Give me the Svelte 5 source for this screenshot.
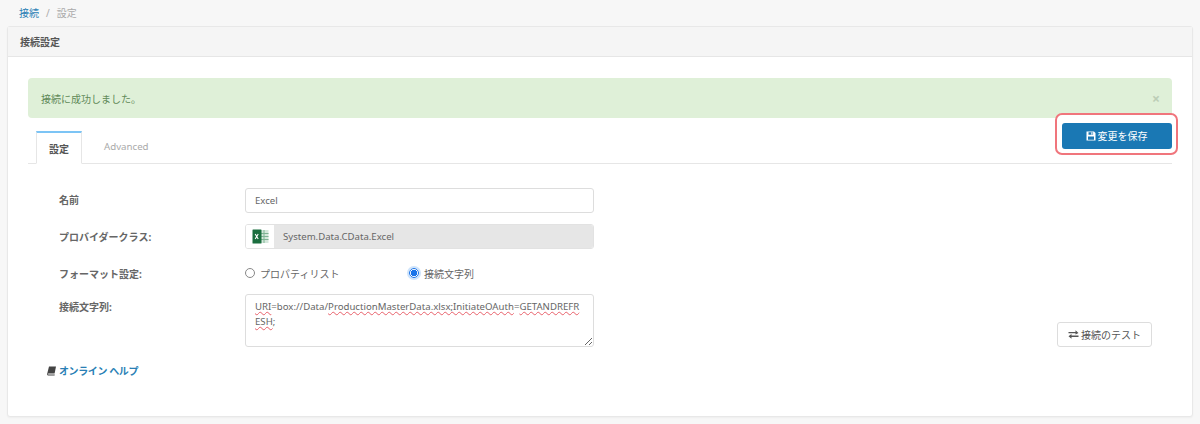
<script lang="ts">
  let format = $state('string');
</script>

<div class="page">
  <nav class="breadcrumb">
    <a href="#top">接続</a>
    <span class="sep">/</span>
    <span class="current">設定</span>
  </nav>

  <section class="card">
    <header class="card-header">接続設定</header>

    <div class="card-body">
      <div class="alert">
        <span>接続に成功しました。</span>
        <span class="close">×</span>
      </div>

      <div class="tabs">
        <div class="tab active">設定</div>
        <div class="tab">Advanced</div>
        <div class="save-highlight">
          <button class="btn-save" type="button">
            <svg width="10" height="10" viewBox="0 0 10 10">
              <path fill="currentColor" fill-rule="evenodd" d="M0.5 0.5h7.5l1.5 1.5v7.5h-9zM2.5 1.2v2.6h4.6V1.2zM5.3 1.6h1.2v1.8H5.3zM2 5.4v3.4h6V5.4z" />
            </svg>
            変更を保存
          </button>
        </div>
      </div>

      <div class="form">
        <div class="row">
          <label class="label name-label" for="name">名前</label>
          <input id="name" class="control" type="text" value="Excel" />
        </div>

        <div class="row provider-row">
          <span class="label">プロバイダークラス:</span>
          <div class="input-group">
            <span class="addon">
              <svg width="17" height="15" viewBox="0 0 17 15">
                <rect x="8" y="1" width="8.5" height="13" fill="#d5e8dc" />
                <path d="M12 1v13M9 4.5h7.5M9 7.5h7.5M9 10.5h7.5" stroke="#7fb394" stroke-width="1" />
                <rect x="0.5" y="0.5" width="9" height="14" rx="0.5" fill="#1b6e3f" />
                <path d="M3.2 5l3 5M6.2 5l-3 5" stroke="#fff" stroke-width="1.1" fill="none" />
              </svg>
            </span>
            <span class="readonly">System.Data.CData.Excel</span>
          </div>
        </div>

        <div class="row format-row">
          <span class="label">フォーマット設定:</span>
          <div class="radios">
            <label class="radio">
              <input type="radio" name="format" value="list" bind:group={format} />
              プロパティリスト
            </label>
            <label class="radio">
              <input type="radio" name="format" value="string" bind:group={format} />
              接続文字列
            </label>
          </div>
        </div>

        <div class="row string-row">
          <span class="label">接続文字列:</span>
          <div class="textarea">
            <span class="typo">URI</span>=box://Data/<span class="typo">ProductionMasterData.xlsx;InitiateOAuth</span>=<span class="typo">GETANDREFR<br />ESH</span>;
          </div>
          <button class="btn-test" type="button">
            <svg width="11" height="9" viewBox="0 0 11 9">
              <path fill="currentColor" d="M0.5 2h7V0.2L10.5 2.9 7.5 4.6V3.2H0.5zM10.5 5.4H3.5V4L0.5 6.3 3.5 8.8V7h7z" />
            </svg>
            接続のテスト
          </button>
        </div>
      </div>

      <a class="help" href="#top">
        <svg width="9" height="10" viewBox="0 0 9 10">
          <path fill="#444" d="M2 0.5h7l-1.4 7H1.4c-.5 0-.6.9 0 .9h6.4l-.2 1H1C.2 9.4 0 8.6 0.2 7.8z" />
        </svg>
        オンライン ヘルプ
      </a>
    </div>
  </section>
</div>

<style>
  :global(body) {
    background: #f7f7f7;
    font-family: "Noto Sans", "Noto Sans CJK JP", sans-serif;
    font-size: 10px;
    color: #555;
  }

  .page {
    height: 424px;
    padding: 0 7px;
    box-sizing: border-box;
    overflow: hidden;
  }

  a {
    color: #2a7fb5;
    text-decoration: none;
  }

  .breadcrumb {
    display: flex;
    align-items: center;
    gap: 7px;
    height: 26px;
    padding-left: 12px;
    line-height: 1;
  }

  .sep,
  .current {
    color: #aaa;
  }

  .card {
    height: 391px;
    box-sizing: border-box;
    background: #fff;
    border: 1px solid #e8e8e8;
    border-radius: 3px;
    box-shadow: 0 1px 2px rgba(0, 0, 0, 0.04);
  }

  .card-header {
    display: flex;
    align-items: center;
    height: 30px;
    padding-left: 12px;
    background: #f5f5f5;
    border-bottom: 1px solid #e6e6e6;
    font-weight: 700;
    color: #555;
    box-sizing: border-box;
  }

  .card-body {
    padding: 21px 20px 0;
  }

  .alert {
    display: flex;
    align-items: center;
    justify-content: space-between;
    height: 40px;
    padding: 0 13px;
    box-sizing: border-box;
    background: #dff0d8;
    border-radius: 4px;
    color: #5f8a58;
  }

  .close {
    font-size: 14px;
    font-weight: 700;
    color: #bccdb6;
    margin-right: -1px;
    margin-top: 1px;
  }

  .tabs {
    display: flex;
    align-items: flex-end;
    height: 33px;
    margin-top: 12px;
    padding-left: 8px;
    border-bottom: 1px solid #e6e6e6;
  }

  .tab {
    display: flex;
    align-items: center;
    justify-content: center;
    height: 33px;
    padding: 0 22px;
    box-sizing: border-box;
    color: #aaa;
    font-size: 9.7px;
  }

  .tab.active {
    width: 46px;
    padding: 0;
    margin-bottom: -1px;
    background: #fff;
    color: #555;
    font-size: 10px;
    font-weight: 700;
    border: 1px solid #e6e6e6;
    border-top: 2px solid #7cc4f5;
    border-bottom-color: #fff;
  }

  .save-highlight {
    align-self: flex-start;
    margin: -17px -6px 0 auto;
    padding: 7.5px 4.5px 4.5px;
    background: #fff;
    border: 2px solid #f0757c;
    border-radius: 7px;
    line-height: 0;
  }

  .btn-save {
    display: inline-flex;
    align-items: center;
    justify-content: center;
    gap: 2px;
    width: 110px;
    height: 26px;
    padding: 0;
    border: 0;
    border-radius: 3px;
    background: #1a78b4;
    color: #fff;
    font: inherit;
    line-height: 1;
  }

  .form {
    margin-top: 24px;
    padding-left: 31px;
  }

  .row {
    display: flex;
    align-items: center;
  }

  .label {
    width: 186px;
    flex: none;
    font-weight: 700;
    color: #666;
  }

  .name-label {
    margin-top: -2px;
  }

  .control {
    width: 349px;
    height: 25px;
    padding: 0 9px;
    box-sizing: border-box;
    border: 1px solid #ddd;
    border-radius: 3px;
    font: inherit;
    font-size: 9.6px;
    color: #666;
  }

  .provider-row {
    margin-top: 11px;
  }

  .input-group {
    display: flex;
    width: 349px;
    height: 25px;
    box-sizing: border-box;
    border: 1px solid #e2e2e2;
    border-radius: 3px;
    overflow: hidden;
  }

  .addon {
    display: flex;
    align-items: center;
    justify-content: center;
    width: 28px;
    background: #fff;
  }

  .readonly {
    flex: 1;
    display: flex;
    align-items: center;
    padding-left: 9px;
    background: #e6e6e6;
    color: #666;
    font-size: 9.6px;
  }

  .format-row {
    margin-top: 16px;
    height: 16px;
  }

  .radios {
    display: flex;
  }

  .radio {
    display: flex;
    align-items: center;
    gap: 5px;
    width: 164px;
    color: #666;
  }

  .radio input {
    appearance: none;
    width: 10px;
    height: 10px;
    margin: 0;
    border: 1px solid #888;
    border-radius: 50%;
    background: #fff;
    box-sizing: border-box;
  }

  .radio input:checked {
    border-color: #1a73e8;
    background: radial-gradient(circle, #1a73e8 0 3px, #fff 3.5px);
    box-shadow: 0 0 0 2px #cfe4fb;
  }

  .string-row {
    align-items: flex-start;
    margin-top: 13px;
  }

  .string-row .label {
    margin-top: 5px;
  }

  .textarea {
    width: 349px;
    height: 53px;
    padding: 4px 9px;
    box-sizing: border-box;
    border: 1px solid #ddd;
    border-radius: 3px;
    font-size: 9.65px;
    line-height: 15px;
    color: #666;
    overflow: auto;
    resize: vertical;
    white-space: nowrap;
  }

  .typo {
    text-decoration: underline wavy #e8606a 1px;
    text-underline-offset: 1px;
  }

  .btn-test {
    display: inline-flex;
    align-items: center;
    justify-content: center;
    gap: 2px;
    align-self: flex-end;
    width: 95px;
    height: 25px;
    margin-left: auto;
    margin-right: 20px;
    padding: 0;
    background: #fff;
    border: 1px solid #ddd;
    border-radius: 3px;
    font: inherit;
    color: #555;
  }

  .help {
    display: inline-flex;
    align-items: center;
    gap: 3px;
    margin-top: 16px;
    margin-left: 19px;
    font-weight: 700;
    letter-spacing: -0.4px;
  }
</style>
